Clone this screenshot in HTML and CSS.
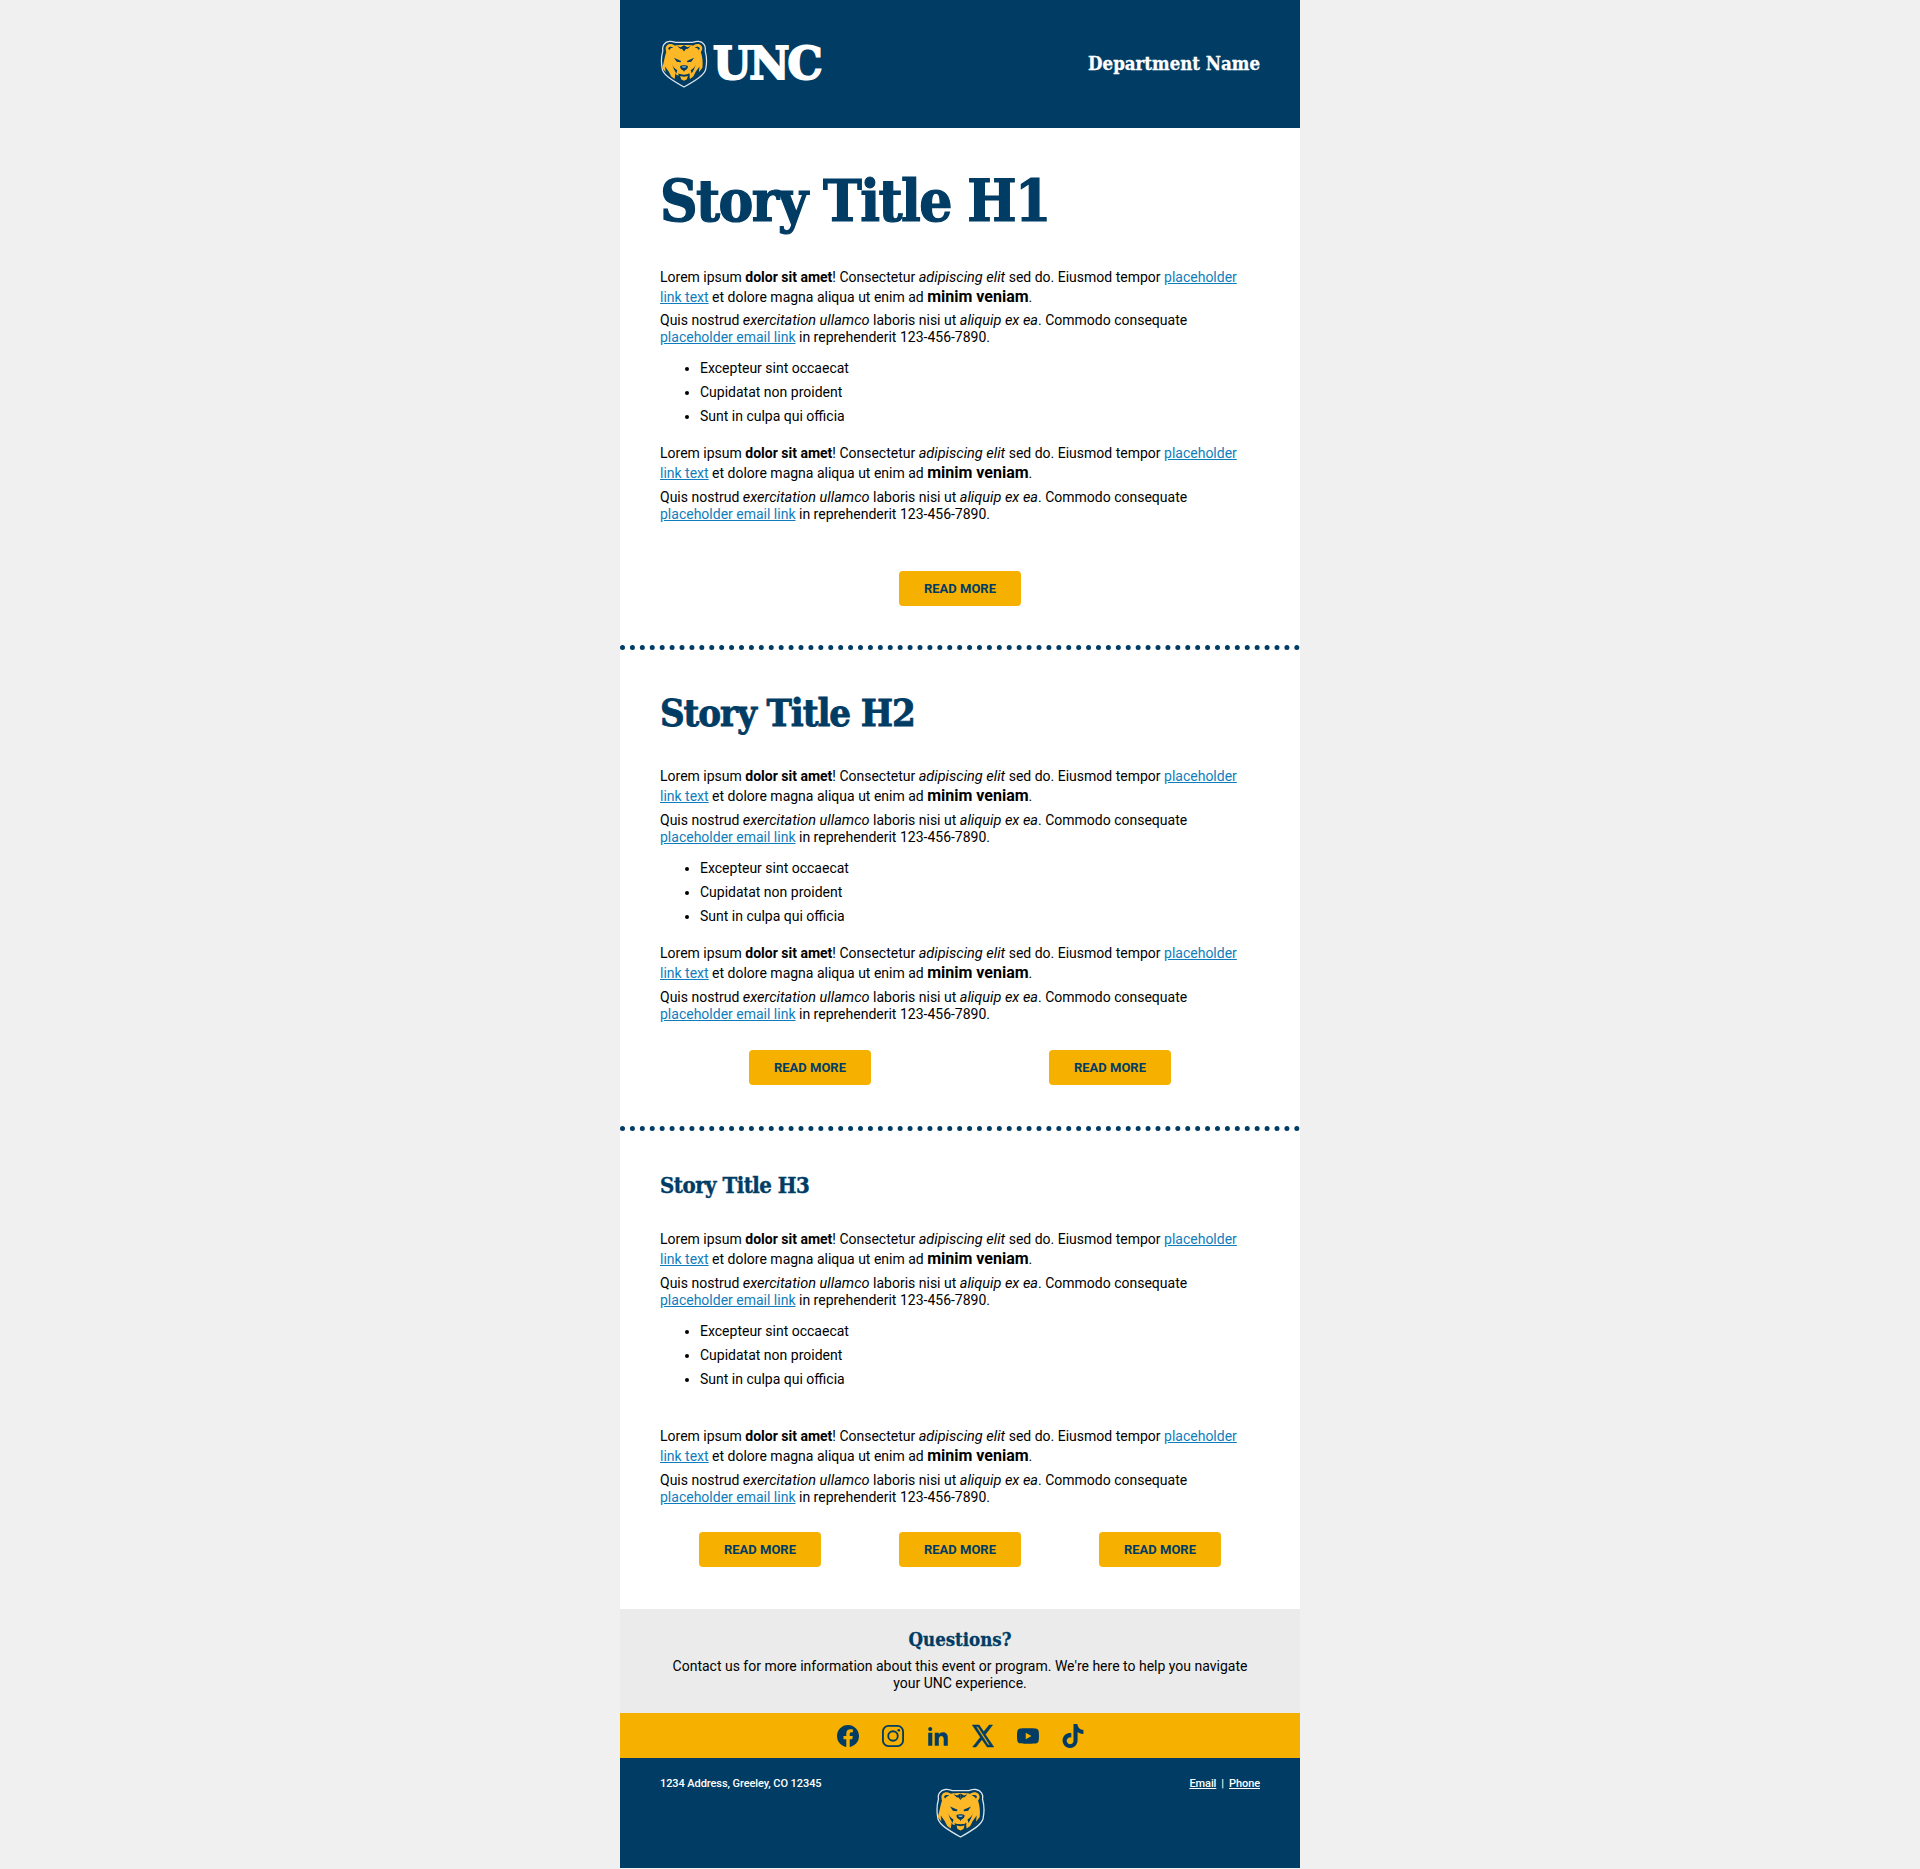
FILE: index.html
```html
<!DOCTYPE html>
<html lang="en">
<head>
<meta charset="utf-8">
<title>UNC Newsletter</title>
<link rel="stylesheet" href="styles.css">
</head>
<body>
<svg class="sprite" width="0" height="0" aria-hidden="true">
  <symbol id="bear-half" viewBox="0 0 49 50">
    <path fill="#003c64" d="M8 8.500c1.500-1.800 4-1.700 5.500-.7-2.300.4-3.500 1-4.500 3ZM17.500 6.200l3.500 1.300 3.500-2v6.500l-2-2.500-2-.3ZM14 18.500l7.500 3.300-.6 1.500-4-.6ZM12 25c1 3 3 5 5.500 6.500l-1 3.500-2.500-4.500Z"/>
  </symbol>
  <symbol id="bear" viewBox="0 0 49 50">
    <path fill="#003c64" stroke="#dbe5ec" stroke-width="1.300" d="M9 1.500C12 .8 14 2 16 2.600h17C35 2 37 .8 40 1.500c5 .6 7.500 5 6.500 9.500 1.700 6 1.800 14 .5 20-2 6-10 11-22.500 18C12 42 4 37 2 31c-1.300-6-1.200-14 .5-20C1.500 6.500 4 2.100 9 1.500Z"/>
    <path fill="#fdb827" d="M5.500 9.500C5 6 8 3.800 11 4.200c2 .2 3 1.300 4 1.600 3-.6 6-.7 9.500-.7s6.500.1 9.500.7c1-.3 2-1.400 4-1.600 3-.4 6 1.800 5.500 5.300-.2 1.500-1 2.300-1.500 3 1.800 5 2.300 11 1.700 16.500l-3.700 4.500.7-6-4 5.500-2.500 5-3.500 2.500-1-6-1 2-6 1.500-6-1.500-1-2-1 6-3.500-2.500-2.500-5-4-5.500.7 6-3.700-4.500C3.700 23.500 4.200 17.500 6 12.500c-.5-.7-.3-1.500-.5-3Z"/>
    <use href="#bear-half"/>
    <g transform="matrix(-1 0 0 1 49 0)"><use href="#bear-half"/></g>
    <path fill="#003c64" d="M20.500 27c1.500-1 6.500-1 8 0 .5 1.800-1 3.800-3 4.600l-1 1.400-1-1.400c-2-.8-3.500-2.800-3-4.600ZM18.500 35c2 1.200 4 .8 6 1.200 2-.4 4 0 6-1.200l-1 5c-2 1.300-8 1.300-10 0Z"/>
    <path fill="#fdb827" d="M20.500 37.500l4 .8 4-.8-1 3.500-3 1.500-3-1.500Z"/>
    <path fill="#8fb0c6" d="M22 27.800c1.300-.5 3.700-.5 5 0l-1.300 1.200h-2.400Z"/>
  </symbol>
</svg>
<main class="page">
  <header class="masthead">
    <div class="logo">
      <svg class="logo-bear"><use href="#bear"/></svg>
      <span class="wordmark">UNC</span>
    </div>
    <div class="dept">Department Name</div>
  </header>

  <section class="story story-one">
    <h1>Story Title H1</h1>
    <p class="lead">Lorem ipsum <b>dolor sit amet</b>! Consectetur <i>adipiscing elit</i> sed do. Eiusmod tempor <a href="#">placeholder link text</a> et dolore magna aliqua ut enim ad <strong>minim veniam</strong>.</p>
    <p class="sub">Quis nostrud <i>exercitation ullamco</i> laboris nisi ut <i>aliquip ex ea</i>. Commodo consequate <a href="#">placeholder email link</a> in reprehenderit 123-456-7890.</p>
    <ul>
      <li>Excepteur sint occaecat</li>
      <li>Cupidatat non proident</li>
      <li>Sunt in culpa qui officia</li>
    </ul>
    <p class="lead">Lorem ipsum <b>dolor sit amet</b>! Consectetur <i>adipiscing elit</i> sed do. Eiusmod tempor <a href="#">placeholder link text</a> et dolore magna aliqua ut enim ad <strong>minim veniam</strong>.</p>
    <p class="sub">Quis nostrud <i>exercitation ullamco</i> laboris nisi ut <i>aliquip ex ea</i>. Commodo consequate <a href="#">placeholder email link</a> in reprehenderit 123-456-7890.</p>
    <div class="actions cols-1"><a class="btn" href="#">READ MORE</a></div>
  </section>

  <section class="story story-two">
    <h2>Story Title H2</h2>
    <p class="lead">Lorem ipsum <b>dolor sit amet</b>! Consectetur <i>adipiscing elit</i> sed do. Eiusmod tempor <a href="#">placeholder link text</a> et dolore magna aliqua ut enim ad <strong>minim veniam</strong>.</p>
    <p class="sub">Quis nostrud <i>exercitation ullamco</i> laboris nisi ut <i>aliquip ex ea</i>. Commodo consequate <a href="#">placeholder email link</a> in reprehenderit 123-456-7890.</p>
    <ul>
      <li>Excepteur sint occaecat</li>
      <li>Cupidatat non proident</li>
      <li>Sunt in culpa qui officia</li>
    </ul>
    <p class="lead">Lorem ipsum <b>dolor sit amet</b>! Consectetur <i>adipiscing elit</i> sed do. Eiusmod tempor <a href="#">placeholder link text</a> et dolore magna aliqua ut enim ad <strong>minim veniam</strong>.</p>
    <p class="sub">Quis nostrud <i>exercitation ullamco</i> laboris nisi ut <i>aliquip ex ea</i>. Commodo consequate <a href="#">placeholder email link</a> in reprehenderit 123-456-7890.</p>
    <div class="actions cols-2"><a class="btn" href="#">READ MORE</a><a class="btn" href="#">READ MORE</a></div>
  </section>

  <section class="story story-three">
    <h3>Story Title H3</h3>
    <p class="lead">Lorem ipsum <b>dolor sit amet</b>! Consectetur <i>adipiscing elit</i> sed do. Eiusmod tempor <a href="#">placeholder link text</a> et dolore magna aliqua ut enim ad <strong>minim veniam</strong>.</p>
    <p class="sub">Quis nostrud <i>exercitation ullamco</i> laboris nisi ut <i>aliquip ex ea</i>. Commodo consequate <a href="#">placeholder email link</a> in reprehenderit 123-456-7890.</p>
    <ul class="list-spaced">
      <li>Excepteur sint occaecat</li>
      <li>Cupidatat non proident</li>
      <li>Sunt in culpa qui officia</li>
    </ul>
    <p class="lead">Lorem ipsum <b>dolor sit amet</b>! Consectetur <i>adipiscing elit</i> sed do. Eiusmod tempor <a href="#">placeholder link text</a> et dolore magna aliqua ut enim ad <strong>minim veniam</strong>.</p>
    <p class="sub">Quis nostrud <i>exercitation ullamco</i> laboris nisi ut <i>aliquip ex ea</i>. Commodo consequate <a href="#">placeholder email link</a> in reprehenderit 123-456-7890.</p>
    <div class="actions cols-3"><a class="btn" href="#">READ MORE</a><a class="btn" href="#">READ MORE</a><a class="btn" href="#">READ MORE</a></div>
  </section>

  <section class="questions">
    <h4>Questions?</h4>
    <p>Contact us for more information about this event or program. We're here to help you navigate your UNC experience.</p>
  </section>

  <nav class="social">
    <svg viewBox="0 0 24 24"><path d="M24 12.073c0-6.627-5.373-12-12-12s-12 5.373-12 12c0 5.990 4.388 10.954 10.125 11.854v-8.385H7.078v-3.470h3.047V9.430c0-3.007 1.792-4.669 4.533-4.669 1.312 0 2.686.235 2.686.235v2.953H15.830c-1.491 0-1.956.925-1.956 1.874v2.250h3.328l-.532 3.470h-2.796v8.385C19.612 23.027 24 18.062 24 12.073z"/></svg>
    <svg viewBox="0 0 24 24"><rect class="line" x="1" y="1" width="22" height="22" rx="6"/><circle class="line" cx="12" cy="12" r="5.200"/><circle cx="18.300" cy="5.700" r="1.400"/></svg>
    <svg viewBox="-1.500 -1.500 27 27"><path d="M4.980 3.500C4.980 4.881 3.870 6 2.500 6S.02 4.881.02 3.500C.02 2.120 1.130 1 2.500 1s2.480 1.120 2.480 2.500zM5 8H0v16h5V8zm7.982 0H8.014v16h4.969v-8.399c0-4.670 6.029-5.052 6.029 0V24H24V13.869c0-7.880-8.922-7.593-11.018-3.714V8z"/></svg>
    <svg class="icon-x" viewBox="1 1 22 22"><path d="M18.244 1h3.308l-7.227 9.500 8.502 12.500H16.170l-5.214-7.500L4.990 23H1.680l7.730-9.800L1.254 1H8.080l4.713 6.800zm-1.161 20h1.833L7.084 2.800H5.117z"/></svg>
    <svg viewBox="0 0 24 24"><path d="M23.498 6.186a3.016 3.016 0 0 0-2.122-2.136C19.505 3.545 12 3.545 12 3.545s-7.505 0-9.377.505A3.017 3.017 0 0 0 .502 6.186C0 8.070 0 12 0 12s0 3.930.502 5.814a3.016 3.016 0 0 0 2.122 2.136c1.871.505 9.376.505 9.376.505s7.505 0 9.377-.505a3.015 3.015 0 0 0 2.122-2.136C24 15.930 24 12 24 12s0-3.930-.502-5.814zM9.545 15.568V8.432L15.818 12l-6.273 3.568z"/></svg>
    <svg viewBox="1 1 22 22"><path d="M12.525.02c1.310-.02 2.610-.01 3.910-.02.08 1.530.63 3.090 1.750 4.170 1.120 1.110 2.700 1.620 4.240 1.790v4.030c-1.440-.05-2.890-.35-4.200-.97-.57-.26-1.100-.59-1.620-.93-.01 2.920.01 5.840-.02 8.750-.08 1.400-.54 2.790-1.350 3.940-1.310 1.920-3.580 3.170-5.910 3.210-1.430.08-2.860-.31-4.080-1.030-2.020-1.190-3.440-3.370-3.650-5.710-.02-.5-.03-1-.01-1.490.18-1.900 1.120-3.720 2.580-4.960 1.660-1.440 3.980-2.130 6.150-1.720.02 1.480-.04 2.960-.04 4.440-.99-.32-2.150-.23-3.020.37-.63.41-1.110 1.040-1.360 1.750-.21.51-.15 1.070-.14 1.610.24 1.640 1.820 3.020 3.500 2.870 1.120-.01 2.190-.66 2.770-1.610.19-.33.4-.67.41-1.060.1-1.790.06-3.570.07-5.360.01-4.030-.01-8.050.02-12.070z"/></svg>
  </nav>

  <footer class="foot">
    <div class="foot-text">1234 Address, Greeley, CO 12345</div>
    <svg class="foot-bear"><use href="#bear"/></svg>
    <div class="foot-text foot-links"><a href="#">Email</a><span class="sep">|</span><a href="#">Phone</a></div>
  </footer>
</main>
</body>
</html>
```
FILE: styles.css
```css
* { box-sizing: border-box; }
html, body { margin: 0; padding: 0; }
body { background: #f0f0f0; font-family: Roboto, "Liberation Sans", sans-serif; font-size: 14px; color: #000; }
.sprite { position: absolute; }
.page { width: 680px; margin: 0 auto; background: #fff; }

.masthead { height: 128px; background: #003c64; padding: 0 40px; display: flex; align-items: center; justify-content: space-between; }
.logo { display: flex; align-items: center; gap: 5px; }
.logo-bear { width: 48px; height: 48px; display: block; }
.wordmark { font-family: "DejaVu Serif", serif; font-weight: 700; font-size: 44px; line-height: 48px; color: #fff; letter-spacing: -2px; -webkit-text-stroke: 2px #fff; }
.dept { font-family: "DejaVu Serif Condensed", "DejaVu Serif", serif; font-weight: 700; font-size: 18.500px; line-height: 24px; color: #fff; -webkit-text-stroke: .3px #fff; }

h1, h2, h3, h4 { font-family: "DejaVu Serif Condensed", "DejaVu Serif", serif; font-weight: 700; color: #003c64; margin: 0; }
h1 { font-size: 58px; line-height: 70px; margin-bottom: 32px; letter-spacing: -1.600px; -webkit-text-stroke: 1.200px #003c64; }
h2 { font-size: 38px; line-height: 46px; margin-bottom: 31px; letter-spacing: -1.100px; -webkit-text-stroke: .8px #003c64; }
h3 { font-size: 22px; line-height: 28px; margin-bottom: 31px; letter-spacing: -.500px; -webkit-text-stroke: .4px #003c64; }
h4 { font-size: 18.500px; line-height: 24px; margin-bottom: 6px; -webkit-text-stroke: .3px #003c64; }

.story { padding: 38px 40px 39px; border-bottom: 5px dotted #003c64; }
.story-two { padding-top: 40px; padding-bottom: 41px; }
.story-three { padding-top: 40px; padding-bottom: 42px; border-bottom: 0; }

p { margin: 0; }
.lead { line-height: 19px; margin-bottom: 6px; }
h1 + .lead { margin-bottom: 5px; }
.sub { line-height: 17px; }
i { font-size: 14.500px; }
a { color: #0f7dbd; }
strong { font-size: 16px; }

ul { margin: 14px 0 19px; padding: 0 0 0 40px; }
li { line-height: 17px; margin-bottom: 7px; }
.list-spaced { margin-bottom: 39px; }

.actions { display: grid; justify-items: center; }
.cols-1 { grid-template-columns: 1fr; margin-top: 48px; }
.cols-2 { grid-template-columns: 1fr 1fr; margin-top: 27px; }
.cols-3 { grid-template-columns: 1fr 1fr 1fr; margin-top: 26px; }
.btn { display: block; width: 122px; height: 35px; line-height: 35px; text-align: center; background: #f6b000; border-radius: 4px; color: #003c64; font-weight: 700; font-size: 13px; text-decoration: none; }

.questions { background: #ebebeb; height: 104px; padding: 19px 40px 0; text-align: center; }
.questions p { line-height: 17px; }

.social { height: 45px; background: #f6b000; display: flex; justify-content: center; align-items: center; gap: 23px; }
.social svg { width: 22px; height: 22px; fill: #003c64; display: block; overflow: visible; }
.social .line { fill: none; stroke: #003c64; stroke-width: 2; }
.social .icon-x { stroke: #003c64; stroke-width: .5; }

.foot { height: 110px; background: #003c64; padding: 18px 40px 0; display: grid; grid-template-columns: 1fr auto 1fr; align-items: start; }
.foot-text { font-size: 11px; line-height: 16px; color: #fff; font-weight: 500; letter-spacing: -.08px; }
.foot-links { text-align: right; }
.foot-links a { color: #fff; }
.sep { margin: 0 5px; }
.foot-bear { width: 49px; height: 50px; display: block; margin-top: 12px; }
```
